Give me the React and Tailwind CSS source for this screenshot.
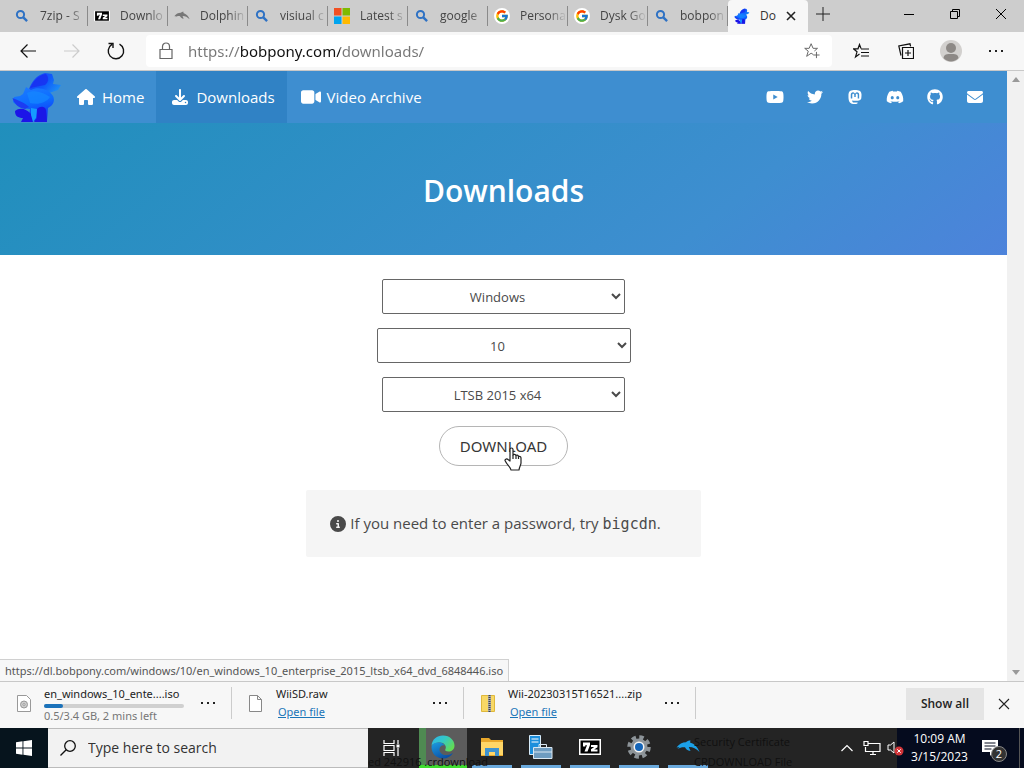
import React, { useState } from "react";
import {
  FaHouse,
  FaDownload,
  FaVideo,
  FaYoutube,
  FaTwitter,
  FaMastodon,
  FaDiscord,
  FaGithub,
  FaEnvelope,
  FaCircleInfo,
} from "react-icons/fa6";
import { FcGoogle } from "react-icons/fc";

const SearchIcon = () => (
  <svg viewBox="0 0 16 16" className="h-4 w-4 text-[#2f72c4]" fill="none" stroke="currentColor" strokeWidth="2">
    <circle cx="6.5" cy="6.5" r="3.6" />
    <path d="M9.3 9.3l3.8 3.8" strokeWidth="2.4" />
  </svg>
);

const SevenZipIcon = ({ className }) => (
  <svg viewBox="0 0 22 16" className={className}>
    <rect width="22" height="16" fill="#000" />
    <rect x="0.75" y="0.75" width="20.500" height="14.500" fill="#000" stroke="#fff" strokeWidth="1.500" />
    <path d="M4 3.500h7v2.500L8.500 12.500H5.500L8 6.200H6.300V7.500H4z" fill="#fff" />
    <path d="M12 6h6.500v2.200L15.200 10.500h3.300v2H12v-2.200l3.200-2.300H12z" fill="#fff" />
  </svg>
);

const DolphinIcon = ({ className }) => (
  <svg viewBox="0 0 24 16" className={className} fill="currentColor">
    <path d="M0.500 8.500C3 5 6.500 3.300 10 3.300C11 2 12.500 1.500 14.500 1.500L14 3.500C18.500 4.800 21.500 8 23.500 13C20 9.500 16.500 7.800 12.800 8L14.500 12C11.500 11.500 9.800 10 9 8.200C6 8 4 8.500 1.500 10L3.500 8Z" />
  </svg>
);

const MicrosoftIcon = () => (
  <svg viewBox="0 0 16 16" className="h-4 w-4">
    <path d="M0 0h7.500v7.500H0z" fill="#f25022" />
    <path d="M8.500 0H16v7.500H8.500z" fill="#7fba00" />
    <path d="M0 8.500h7.500V16H0z" fill="#00a4ef" />
    <path d="M8.500 8.500H16V16H8.500z" fill="#ffb900" />
  </svg>
);

const GoogleIcon = () => (
  <span className="flex h-4 w-4 items-center justify-center rounded-full bg-white">
    <FcGoogle className="h-3.5 w-3.5" />
  </span>
);

const PonyLogo = ({ className }) => (
  <svg viewBox="0 0 50 52" className={className}>
    <defs>
      <linearGradient id="pony-head" x1="0" y1="0" x2="1" y2="0.6">
        <stop offset="0" stopColor="#1d3cf8" />
        <stop offset="0.6" stopColor="#0f5cfb" />
        <stop offset="1" stopColor="#1c8cf5" />
      </linearGradient>
      <linearGradient id="pony-body" x1="0" y1="0" x2="0.3" y2="1">
        <stop offset="0" stopColor="#1f7cff" />
        <stop offset="0.55" stopColor="#0c6dff" />
        <stop offset="1" stopColor="#1438f4" />
      </linearGradient>
    </defs>
    <path d="M17 18C20 10 25 4 33 2L40 3L42 9L41 13L49 14L46 19L40 21L33 24L20 21Z" fill="url(#pony-head)" />
    <path d="M18 17C22 9 27 4 34 3C37 6 37 11 33 14C28 15 23 16 18 17Z" fill="#1a28ee" opacity="0.7" />
    <path d="M14 16L19 19C26 15 37 18 41 25C43 29 42 34 36 37L35 50H16L18 38C12 38 5 35 1 31L2 26L8 25L11 23Z" fill="url(#pony-body)" />
    <path d="M0.500 27C5 29 12 31 17 36L13 38C7 37 2 33 0.500 27Z" fill="#1c3cf2" />
    <path d="M3 40C8 36 14 38 18 42L22 46L21 51H9L11 47C6 47 3 45 3 40Z" fill="#1c14e8" />
    <path d="M25 38C28 35 33 35 34 39L35 51H22L25 47Z" fill="#1b18e6" />
    <path d="M15 22C22 18 31 21 38 26C34 32 26 34 18 32Z" fill="#168aff" opacity="0.65" />
    <path d="M19 37L25 38L24 47L21 51L19 44Z" fill="#159cff" />
  </svg>
);

const tabs = [
  { title: "7zip - S", icon: <SearchIcon /> },
  { title: "Downlo", icon: <SevenZipIcon className="h-3 w-4" /> },
  { title: "Dolphin", icon: <DolphinIcon className="h-3 w-4 text-[#777]" /> },
  { title: "visiual c", icon: <SearchIcon /> },
  { title: "Latest s", icon: <MicrosoftIcon /> },
  { title: "google", icon: <SearchIcon /> },
  { title: "Persona", icon: <GoogleIcon /> },
  { title: "Dysk Go", icon: <GoogleIcon /> },
  { title: "bobpon", icon: <SearchIcon /> },
];

const TabStrip = () => (
  <div className="flex h-8 shrink-0 bg-[#cdcdcd] pl-2">
    {tabs.map((tab) => (
      <button key={tab.title} className="flex w-20 items-center pl-1.5 text-left">
        <span className="flex w-4 shrink-0 justify-center">{tab.icon}</span>
        <span className="ml-2.5 w-[47px] shrink-0 overflow-hidden whitespace-nowrap text-xs text-[#444] mask-r-from-60%">
          {tab.title}
        </span>
        <span className="h-5 w-px shrink-0 bg-[#8a8a8a]" />
      </button>
    ))}
    <div className="flex w-20 items-center rounded-t bg-[#f7f7f7] pl-1.5">
      <PonyLogo className="h-4 w-4 shrink-0" />
      <span className="ml-2.5 w-4 overflow-hidden whitespace-nowrap text-xs text-[#333]">
        Do
      </span>
      <button aria-label="Close tab" className="ml-1.5 p-1">
        <svg viewBox="0 0 10 10" className="h-2.5 w-2.5" stroke="#222" strokeWidth="1.6">
          <path d="M1 1l8 8M9 1l-8 8" />
        </svg>
      </button>
    </div>
    <button aria-label="New tab" className="px-2 pb-1">
      <svg viewBox="0 0 14 14" className="h-3.5 w-3.5" stroke="#222">
        <path d="M7 0v14M0 7h14" />
      </svg>
    </button>
    <div className="ml-auto flex pb-1">
      <button aria-label="Minimize" className="flex w-[46px] items-center justify-center">
        <svg viewBox="0 0 10 10" className="h-2.5 w-2.5" stroke="#000">
          <path d="M0 5.500h10" />
        </svg>
      </button>
      <button aria-label="Restore" className="flex w-[46px] items-center justify-center">
        <svg viewBox="0 0 10 10" className="h-2.5 w-2.5" fill="none" stroke="#000">
          <path d="M0.500 2.500h7v7h-7zM2.500 2.500v-2h7v7h-2" />
        </svg>
      </button>
      <button aria-label="Close" className="flex w-[46px] items-center justify-center">
        <svg viewBox="0 0 10 10" className="h-2.5 w-2.5" stroke="#000">
          <path d="M0 0l10 10M10 0L0 10" />
        </svg>
      </button>
    </div>
  </div>
);

const Toolbar = () => {
  const [url, setUrl] = useState("https://bobpony.com/downloads/");

  return (
    <div className="flex h-[39px] shrink-0 items-center border-b border-[#c8c8c8] bg-[#f7f7f7] px-1.5">
      <button aria-label="Back" className="flex w-11 justify-center">
        <svg viewBox="0 0 16 16" className="h-4 w-4" fill="none" stroke="#111" strokeWidth="1.2">
          <path d="M16 8H1M7.500 1.500L1 8l6.500 6.500" />
        </svg>
      </button>
      <button aria-label="Forward" disabled className="flex w-11 justify-center">
        <svg viewBox="0 0 16 16" className="h-4 w-4" fill="none" stroke="#ccc" strokeWidth="1.2">
          <path d="M0 8h15M8.500 1.500L15 8l-6.500 6.500" />
        </svg>
      </button>
      <button aria-label="Refresh" className="flex w-11 justify-center">
        <svg viewBox="0 0 18 18" className="h-[18px] w-[18px]" fill="none" stroke="#111" strokeWidth="1.4">
          <path d="M12.500 2.200A7.700 7.700 0 1 1 5 2.400M1.500 1.500H6V6" />
        </svg>
      </button>
      <div className="ml-2 flex h-8 flex-1 items-center rounded-sm bg-white px-3">
        <svg viewBox="0 0 14 18" className="ml-px h-[18px] w-3.5 shrink-0" fill="none" stroke="#666" strokeWidth="1.2">
          <path d="M1 7.500h12v9H1zM3.500 7.500V4.500a3.500 3.500 0 0 1 7 0v3" />
        </svg>
        <input
          aria-label="Address"
          value={url}
          onChange={(e) => setUrl(e.target.value)}
          className="ml-[15px] min-w-0 flex-1 bg-[linear-gradient(90deg,#767676_52px,#111_52px,#111_152px,#767676_152px)] bg-clip-text font-['Noto_Sans',sans-serif] text-[15px] text-transparent outline-none"
        />
        <button aria-label="Add to favorites">
          <svg viewBox="0 0 18 18" className="h-4 w-4" fill="none" stroke="#666" strokeWidth="1.1">
            <path d="M10.500 13L8 11.500l-5 3.500 1.800-5.800L0.800 6h5L8 0.800 10.200 6h5l-3.500 3M14 10v7M10.500 13.500h7" />
          </svg>
        </button>
      </div>
      <div className="ml-1.5 flex items-center">
        <button aria-label="Favorites" className="flex w-[45px] justify-center">
          <svg viewBox="0 0 16 16" className="h-4 w-4" fill="none" stroke="#111" strokeWidth="1.2">
            <path d="M8 5.500L6.500 1.500 5 5.800H0.500L4 8.800 2.500 14 6.500 11M8 6h8M8 9.500h8M8 13h8" />
          </svg>
        </button>
        <button aria-label="Collections" className="flex w-[45px] justify-center">
          <svg viewBox="0 0 16 16" className="h-4 w-4" fill="none" stroke="#111" strokeWidth="1.2">
            <path d="M4.500 4.500h11v11h-11zM10 7v6M7 10h6M3 12.500L0.800 3 12 0.800l0.600 2.500" />
          </svg>
        </button>
        <button aria-label="Profile" className="flex w-[45px] justify-center">
          <svg viewBox="0 0 22 22" className="h-[22px] w-[22px]">
            <circle cx="11" cy="11" r="11" fill="#d2d0ce" />
            <circle cx="11" cy="8" r="5" fill="#8d8986" />
            <path d="M3.500 18C4 14 7 14 11 14s7 0 7.500 4C15 22.500 7 22.500 3.500 18z" fill="#8d8986" />
          </svg>
        </button>
        <button aria-label="Settings and more" className="flex w-[45px] justify-center">
          <svg viewBox="0 0 16 4" className="h-1 w-4" fill="#222">
            <path d="M1 1h2v2H1zM7 1h2v2H7zM13 1h2v2h-2z" />
          </svg>
        </button>
      </div>
    </div>
  );
};

const socials = [
  { name: "YouTube", Icon: FaYoutube },
  { name: "Twitter", Icon: FaTwitter },
  { name: "Mastodon", Icon: FaMastodon },
  { name: "Discord", Icon: FaDiscord },
  { name: "GitHub", Icon: FaGithub },
  { name: "Email", Icon: FaEnvelope },
];

const SiteNav = () => (
  <nav className="flex h-[52px] bg-[#3e8ed0] text-[15px] text-white">
    <a href="#" aria-label="bobpony" className="pl-3">
      <PonyLogo className="h-[52px] w-[50px]" />
    </a>
    <a href="#home" className="flex items-center gap-1.5 pr-3 pl-3.5">
      <FaHouse className="h-4 w-5" />
      Home
    </a>
    <a href="#downloads" className="flex items-center gap-1.5 bg-[#3082c5] pr-3 pl-3.5">
      <FaDownload className="h-4 w-5" />
      Downloads
    </a>
    <a href="#archive" className="flex items-center gap-1.5 px-3.5">
      <FaVideo className="h-5 w-5" />
      Video Archive
    </a>
    <div className="ml-auto flex items-center pr-3">
      {socials.map(({ name, Icon }) => (
        <a key={name} href={"#" + name} aria-label={name} className="flex w-10 justify-center">
          <Icon className="h-4 w-[18px]" />
        </a>
      ))}
    </div>
  </nav>
);

const selectClass =
  "block h-[35px] rounded-xs border border-[#666] bg-white px-2 text-center text-[13px] text-[#4a4a4a]";

const DownloadForm = () => (
  <form className="flex flex-col items-center pt-6" onSubmit={(e) => e.preventDefault()}>
    <div className="flex flex-col items-center gap-3.5">
      <select aria-label="Product" className={`${selectClass} w-[243px]`}>
        <option>Windows</option>
      </select>
      <select aria-label="Version" className={`${selectClass} w-[254px]`}>
        <option>10</option>
      </select>
      <select aria-label="Edition" className={`${selectClass} w-[243px]`}>
        <option>LTSB 2015 x64</option>
      </select>
      <button
        type="submit"
        className="relative h-10 rounded-full border border-[#b5b5b5] px-5 font-['Noto_Sans',sans-serif] text-[15px] text-[#363636]"
      >
        DOWNLOAD
        {/* mouse pointer */}
        <svg
          viewBox="0 0 18 24"
          className="absolute top-5 left-16 h-6 w-[18px]"
          fill="#fff"
          stroke="#222"
          strokeWidth="1.2"
          strokeLinejoin="round"
        >
          <path d="M6 14V2.500C6 0.500 9 0.500 9 2.500V8C9.500 7 11.500 7 12 8.500C12.500 7.800 14 8 14.500 9.500C15.500 9 17 9.500 17 11V16C17 18 15.500 19.500 15 23H7C6.500 20 3 18 1 13.500C0.800 12 3 11.500 4 12.500Z" />
          <path d="M9 8v4M12 8.500V12M14.500 9.500V12" />
        </svg>
      </button>
    </div>
    <p className="mt-6 flex items-center rounded-xs bg-[#f5f5f5] px-6 py-5 text-[15px] leading-[26px] text-[#4a4a4a]">
      <FaCircleInfo className="mr-1 h-4 w-4" />
      <span className="pr-4">
        If you need to enter a password, try{" "}
        <code className="font-['DejaVu_Sans_Mono',monospace] text-[15px]">bigcdn</code>.
      </span>
    </p>
  </form>
);

const DownloadItem = ({ icon, name, children }) => (
  <div className="flex w-[232px] items-center pt-1 pb-2">
    <span className="flex w-11 shrink-0 items-center justify-center pr-0 pl-1">{icon}</span>
    <div className="h-full w-[140px] whitespace-nowrap font-['Noto_Sans',sans-serif] text-[#222]">
      <div className="text-[11px] leading-4">{name}</div>
      {children}
    </div>
    <button aria-label={"Options for " + name} className="flex w-[47px] justify-center">
      <svg viewBox="0 0 16 4" className="h-1 w-4" fill="#222">
        <path d="M1 1h2v2H1zM7 1h2v2H7zM13 1h2v2h-2z" />
      </svg>
    </button>
    <span className="h-8 w-px bg-[#ccc]" />
  </div>
);

const DownloadShelf = () => (
  <div className="flex h-[47px] shrink-0 border-t border-[#c8c8c8] bg-[#f7f7f7]">
    <DownloadItem
      name="en_windows_10_ente....iso"
      icon={
        <svg viewBox="0 0 14 17" className="h-[17px] w-3.5" fill="#fff" stroke="#999">
          <path d="M0.500 0.500h9l4 4v12h-13z" />
          <circle cx="7" cy="9.500" r="3.500" fill="#ccc" />
          <circle cx="7" cy="9.500" r="1" />
        </svg>
      }
    >
      <div className="mt-0.5 h-1 rounded-full bg-[#d0d0d0]">
        <div className="h-1 rounded-full bg-[#1b72ba]" style={{ width: `${(0.5 / 3.4) * 100 - 1}%` }} />
      </div>
      <div className="text-[11px] leading-4 text-[#767676]">0.5/3.4 GB, 2 mins left</div>
    </DownloadItem>
    <DownloadItem
      name="WiiSD.raw"
      icon={
        <svg viewBox="0 0 14 17" className="h-[17px] w-3.5" fill="#fff" stroke="#888">
          <path d="M0.500 0.500h8l4 4v12h-12zM8.500 0.500v4h4" />
        </svg>
      }
    >
      <a href="#open-raw" className="ml-0.5 block text-[11px] leading-5 text-[#1a75b8] underline">
        Open file
      </a>
    </DownloadItem>
    <DownloadItem
      name="Wii-20230315T16521....zip"
      icon={
        <svg viewBox="0 0 14 17" className="h-[17px] w-3.5">
          <path d="M0.500 0.500h13v16h-13z" fill="#f8d865" stroke="#dfb83c" />
          <path d="M7 0h3v17H7z" fill="#aaa" />
          <path d="M8.500 0v17" stroke="#444" strokeWidth="2" strokeDasharray="1 1" />
        </svg>
      }
    >
      <a href="#open-zip" className="ml-0.5 block text-[11px] leading-5 text-[#1a75b8] underline">
        Open file
      </a>
    </DownloadItem>
    <div className="ml-auto flex items-center pb-0.5">
      <button className="h-8 bg-[#e5e5e5] px-[15px] text-xs font-semibold text-[#222]">Show all</button>
      <button aria-label="Close downloads bar" className="px-3.5">
        <svg viewBox="0 0 12 12" className="h-3 w-3" stroke="#222" strokeWidth="1.1">
          <path d="M1 1l10 10M11 1L1 11" />
        </svg>
      </button>
    </div>
  </div>
);

const EdgeIcon = () => (
  <svg viewBox="0 0 24 24" className="h-6 w-6">
    <defs>
      <linearGradient id="edge-top" x1="0" y1="0" x2="1" y2="0.6">
        <stop offset="0" stopColor="#2fb4ec" />
        <stop offset="0.5" stopColor="#33c8c8" />
        <stop offset="1" stopColor="#62dc55" />
      </linearGradient>
      <linearGradient id="edge-low" x1="0" y1="0" x2="0.6" y2="1">
        <stop offset="0" stopColor="#1b9de2" />
        <stop offset="1" stopColor="#0c4fa4" />
      </linearGradient>
    </defs>
    <path d="M0.500 11C1 4 6 0.500 12 0.500C19 0.500 23.500 5.500 23.500 10.500C23.500 14.500 20.500 16.500 17.500 16.500C14.500 16.500 13.500 15.500 14.500 14C16 11 13 7.500 9 7.500C5 7.500 1.500 9 0.500 11Z" fill="url(#edge-top)" />
    <path d="M0.500 12C1 8.500 5 7.200 8.500 7.500C11 7.700 13 9 13.800 10.500C11 9.500 8.500 11.500 8.500 14.500C8.500 18 12 20.500 16 20C18.500 19.800 20.500 18.800 22 18C20 21.500 16.500 23.500 12 23.500C5.500 23.500 0.500 18.500 0.500 12Z" fill="url(#edge-low)" />
  </svg>
);

const runningApps = [
  {
    name: "File Explorer",
    icon: (
      <svg viewBox="0 0 22 20" className="h-5 w-[22px]">
        <path d="M0 1h8l2 2h12v16H0z" fill="#e9a82b" />
        <path d="M0 5h22v13H0z" fill="#ffd667" />
        <path d="M4 11h14v8h-4v-4H8v4H4z" fill="#3f93cf" />
      </svg>
    ),
  },
  {
    name: "Server Manager",
    icon: (
      <svg viewBox="0 0 24 24" className="h-6 w-6">
        <path d="M0.500 0.500h11v19h-11z" fill="#1c8fdc" stroke="#d8ecfa" />
        <path d="M2.500 4h7M2.500 7h7" stroke="#fff" />
        <path d="M4.500 12.500h18.500v11H4.500z" fill="#6e9cc0" stroke="#dbe8f2" />
        <path d="M10 12V9.500h7.500V12M5 17h18" fill="none" stroke="#dbe8f2" />
      </svg>
    ),
  },
  { name: "7-Zip", icon: <SevenZipIcon className="h-4 w-[22px]" /> },
  {
    name: "Settings",
    icon: (
      <svg viewBox="0 0 24 24" className="h-6 w-6">
        <circle cx="12" cy="12" r="9.500" fill="none" stroke="#8d9499" strokeWidth="4.500" strokeDasharray="4.260 3.200" />
        <circle cx="12" cy="12" r="8.500" fill="#8d9499" />
        <circle cx="12" cy="12" r="5.500" fill="#f4f4f4" />
        <circle cx="12" cy="12" r="4" fill="#1565b8" />
      </svg>
    ),
  },
  { name: "Dolphin", icon: <DolphinIcon className="h-4 w-6 text-[#1ba0e8]" /> },
];

const Taskbar = () => (
  <div className="relative flex h-10 shrink-0 bg-[#242424] text-white">
    <button aria-label="Start" className="flex w-12 items-center justify-center bg-[#06141d]">
      <svg viewBox="0 0 16 16" className="h-4 w-4" fill="#fff">
        <path d="M0 2.200l6.500-0.900v6.200H0zM7.400 1.200L16 0v7.500H7.400zM0 8.400h6.500v6.300L0 13.800zM7.400 8.400H16V16l-8.600-1.200z" />
      </svg>
    </button>
    <div className="flex w-80 items-center border-y border-[#bbb] bg-[#f2f2f2] pl-3">
      <svg viewBox="0 0 16 16" className="h-4 w-4 shrink-0" fill="none" stroke="#111" strokeWidth="1.300">
        <circle cx="10" cy="6" r="5.300" />
        <path d="M6.200 9.800L0.500 15.500" />
      </svg>
      <input
        aria-label="Search"
        placeholder="Type here to search"
        className="ml-3 min-w-0 flex-1 text-sm outline-none placeholder:text-[#333]"
      />
    </div>
    <button aria-label="Task View" className="flex w-[51px] items-center justify-center pr-1">
      <svg viewBox="0 0 18 16" className="h-4 w-[18px]" fill="none" stroke="#fff" strokeWidth="1.200">
        <path d="M1 0v3.500h10V0M1 5.500h10v5H1zM1 16v-3.500h10V16M15 0v4M15 8v8" />
        <path d="M13.500 4.500h3v3h-3z" fill="#fff" stroke="none" />
      </svg>
    </button>
    <button
      aria-label="Microsoft Edge"
      className="flex w-12 items-center justify-center border-b-3 border-[#3fdc2f] bg-[linear-gradient(90deg,#4f8a52_7px,#5c5c5c_7px)]"
    >
      <EdgeIcon />
    </button>
    {runningApps.map((app) => (
      <button key={app.name} aria-label={app.name} className="flex w-[49px] flex-col items-center">
        <span className="flex flex-1 items-center">{app.icon}</span>
        <span className="h-[3px] w-10 bg-[#6aa9dc]" />
      </button>
    ))}
    {/* window behind the translucent bar */}
    <div className="pointer-events-none absolute bottom-0 left-[368px] text-[11px] leading-3 text-[#101010]">
      ed 242916 .crdownload
    </div>
    <div className="pointer-events-none absolute bottom-0 left-[694px] text-[11px] leading-5 text-[#101010]">
      <div>Security Certificate</div>
      <div className="-mb-1">CRDOWNLOAD File</div>
    </div>
    <div className="ml-auto flex items-center">
      <button aria-label="Show hidden icons" className="px-1.5">
        <svg viewBox="0 0 12 8" className="h-2 w-3" fill="none" stroke="#fff" strokeWidth="1.200">
          <path d="M0.500 7L6 1.500 11.500 7" />
        </svg>
      </button>
      <svg viewBox="0 0 18 16" className="ml-1 h-4 w-[18px]" fill="none" stroke="#fff" strokeWidth="1.200">
        <path d="M5 3.500h12v8H2.500V7M7 14.500h6M10 11.500v3M1 1.500h4v4H1z" />
      </svg>
      <svg viewBox="0 0 18 16" className="relative z-10 ml-1.5 -mr-2 h-4 w-[18px]" fill="none" stroke="#fff">
        <path d="M1 5h2.500L7 2v11L3.500 10H1z" />
        <circle cx="12" cy="11" r="4.500" fill="#d13438" stroke="none" />
        <path d="M10.300 9.300l3.400 3.400M13.700 9.300l-3.400 3.400" />
      </svg>
      <div className="flex h-full items-center bg-[#050b1e]">
        <time className="w-[85px] text-center text-xs leading-[18px]">
          10:09 AM
          <br />
          3/15/2023
        </time>
        <button aria-label="2 notifications" className="relative h-full w-[38px] border-r border-[#555]">
          <svg viewBox="0 0 16 16" className="h-4 w-4" fill="#fff">
            <path d="M0 0h16v12h-5l-3 4v-4H0z" />
            <path d="M2.500 3h11M2.500 6h11M2.500 9h7" stroke="#050b1e" />
          </svg>
          <span className="absolute right-3 bottom-1.5 flex h-4 w-4 items-center justify-center rounded-full border border-[#888] bg-[#333] text-[11px]">
            2
          </span>
        </button>
        <span className="w-1" />
      </div>
    </div>
  </div>
);

const App = () => {
  return (
    <div className="flex h-screen flex-col overflow-hidden bg-white font-['Open_Sans','Noto_Sans',sans-serif]">
      <TabStrip />
      <Toolbar />
      <div className="relative flex min-h-0 flex-1">
        <main className="flex-1">
          <SiteNav />
          <header className="flex h-[132px] items-center justify-center bg-[linear-gradient(141deg,#208fbc_0%,#3e8ed0_71%,#4d83db_100%)] pt-1">
            <h1 className="text-3xl font-semibold text-white">Downloads</h1>
          </header>
          <DownloadForm />
        </main>
        <div className="flex w-[17px] flex-col items-center justify-between bg-[#f1f1f1] py-1.5">
          <svg viewBox="0 0 8 5" className="h-[5px] w-2" fill="#999">
            <path d="M0 5l4-5 4 5z" />
          </svg>
          <svg viewBox="0 0 8 5" className="h-[5px] w-2" fill="#999">
            <path d="M0 0l4 5 4-5z" />
          </svg>
        </div>
        <div className="absolute bottom-0 left-0 border-t border-r border-[#d0d0d0] bg-[#f7f7f7] px-[5px] font-['Noto_Sans',sans-serif] text-[11px] leading-[21px] text-[#555]">
          https://dl.bobpony.com/windows/10/en_windows_10_enterprise_2015_ltsb_x64_dvd_6848446.iso
        </div>
      </div>
      <DownloadShelf />
      <Taskbar />
    </div>
  );
};

export default App;
